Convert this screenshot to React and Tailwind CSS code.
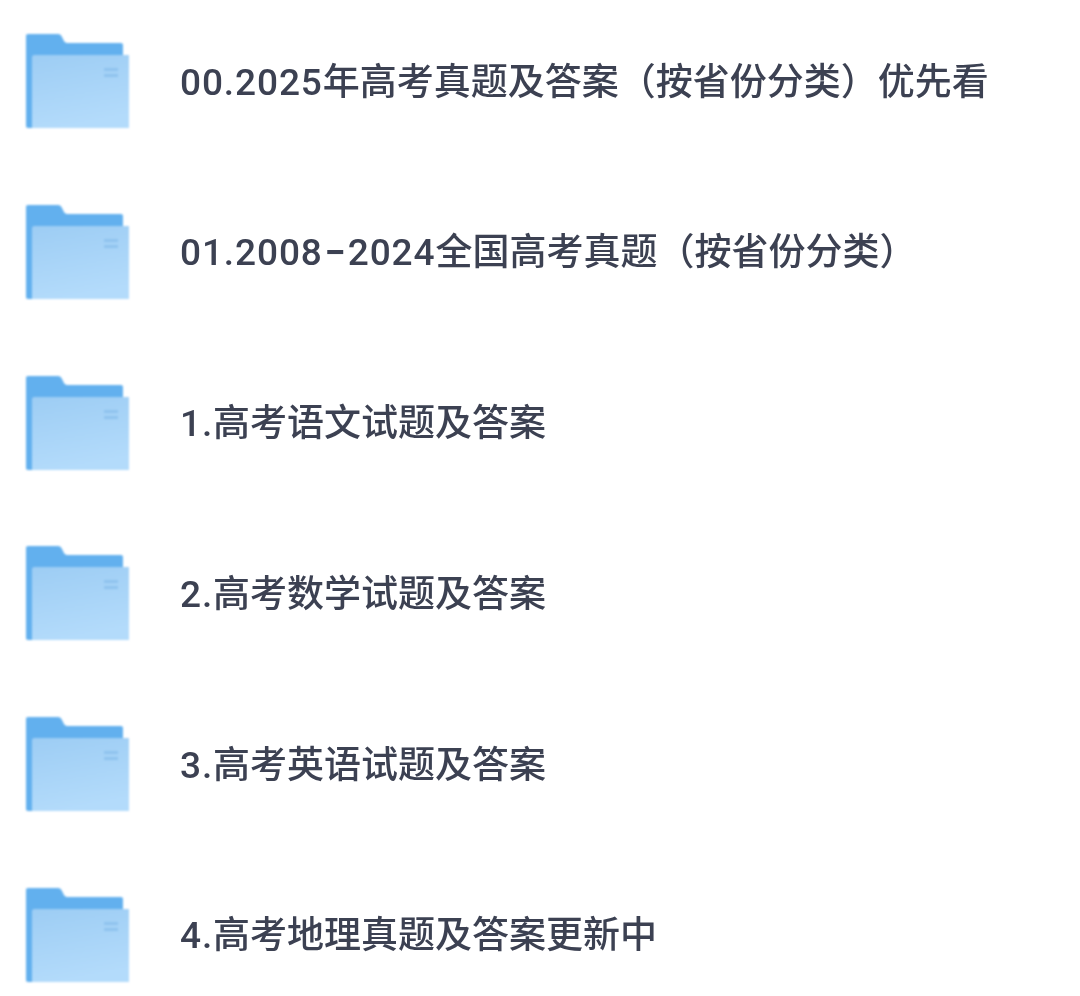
const items = [
  "00.2025年高考真题及答案（按省份分类）优先看",
  "01.2008-2024全国高考真题（按省份分类）",
  "1.高考语文试题及答案",
  "2.高考数学试题及答案",
  "3.高考英语试题及答案",
  "4.高考地理真题及答案更新中",
];

function Folder({ id }) {
  return (
    <svg width="103" height="94" viewBox="0 0 103 94" className="shrink-0 blur-[1px]">
      <defs>
        <linearGradient id={id} x1="0" y1="0" x2="0.25" y2="1">
          <stop offset="0" stopColor="#9dcdf4" />
          <stop offset="1" stopColor="#b3dbfb" />
        </linearGradient>
      </defs>
      <path d="M2 0H32C34 0 35 1 36 3L38 7C39 8.500 40 9 42 9H95C96.500 9 97 10 97 11V30H6V94H2C0.800 94 0 93 0 92V2C0 0.800 0.800 0 2 0Z" fill="#62b0ee" />
      <path d="M6 23C6 22 6.800 21 8 21H103V94H6Z" fill={`url(#${id})`} />
      <rect x="78" y="34" width="14" height="3" fill="#8fc3ee" />
      <rect x="78" y="40" width="14" height="3" fill="#8fc3ee" />
    </svg>
  );
}

function Label({ text }) {
  return text.split(/([0-9.]+|-)/).map((part, i) => {
    if (part === "-") {
      return (
        <span key={i} className="mx-[1px] text-[50px] font-normal leading-[0] align-[-3px] [font-family:Inter,sans-serif]">
          {part}
        </span>
      );
    }
    if (/^[0-9.]+$/.test(part)) {
      return (
        <span key={i} className="tracking-[0.9px] [font-family:Roboto,sans-serif]">
          {part}
        </span>
      );
    }
    return part;
  });
}

export default function App() {
  return (
    <div className="min-h-[996px] bg-white pl-[26px] pt-[34px] flex flex-col gap-[76.8px]">
      {items.map((t, i) => (
        <div key={t} className="flex items-center gap-[51px] h-[94px]">
          <Folder id={`f${i}`} />
          <span className="-mt-[1px] text-[37px] leading-[44px] font-medium text-[#3c4152] whitespace-nowrap blur-[0.7px] [font-family:'Noto_Sans_CJK_SC',sans-serif]">
            <Label text={t} />
          </span>
        </div>
      ))}
    </div>
  );
}
